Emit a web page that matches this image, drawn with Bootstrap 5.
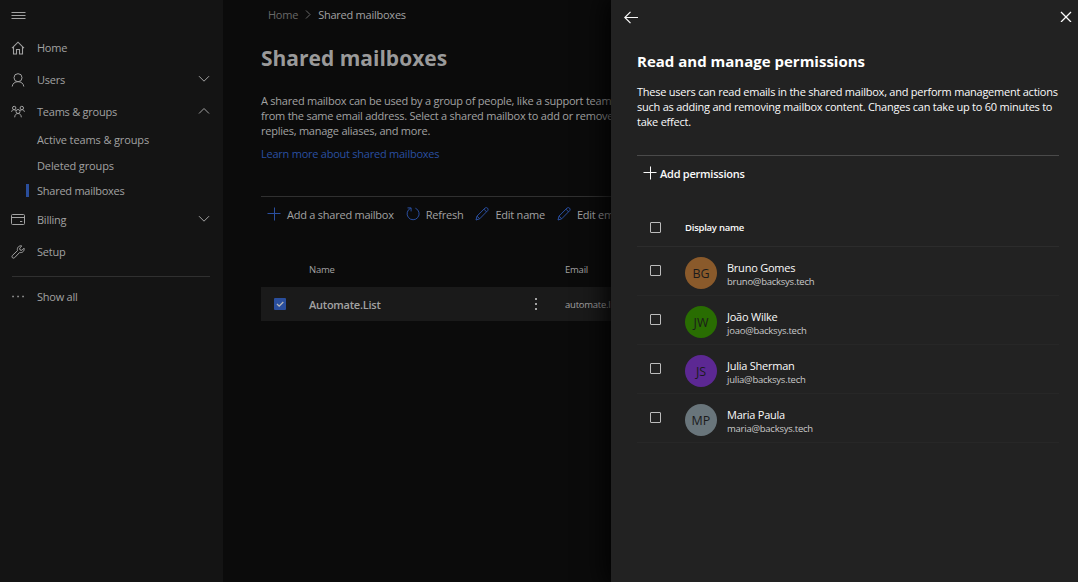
<!DOCTYPE html>
<html lang="en" data-bs-theme="dark">
<head>
<meta charset="utf-8">
<meta name="viewport" content="width=device-width, initial-scale=1">
<title>Shared mailboxes</title>
<link href="https://cdn.jsdelivr.net/npm/bootstrap@5.3.0/dist/css/bootstrap.min.css" rel="stylesheet">
<style>
body{background:#0b0b0b;font-family:"Open Sans","Noto Sans",sans-serif;font-size:11px;line-height:15px;letter-spacing:-.24px;white-space:nowrap}
svg{display:block;flex:none;fill:none;stroke:currentColor;stroke-width:1}
a{text-decoration:none}
.side{width:223px;background:#141414;color:#a2a2a2}
.side .nav-link{height:32px;padding:0 13px 0 11px;color:inherit;gap:12px}
.side .nav-link span{padding-bottom:2px}
.side .nav-link .chev{margin:0 0 2px auto}
.side .sub{height:25.4px;padding:0 0 2px 37px;letter-spacing:-.12px}
.side .sub.tight{letter-spacing:-.25px}
.side .sub.active{padding-left:26px;gap:8px}
.side .sub.active::before{content:"";width:3px;height:13px;background:#2a4e9c}
.menu-top{height:31px;padding:0 11px;margin-bottom:1px}
.split{height:1px;margin:8px 13px 4px 12px;background:#303030}
.content{width:388px;padding-left:38px;color:#a2a2a2}
.crumbs{height:29px;padding-left:7px;gap:7px}
.crumbs a,.crumbs svg{color:#686868}
.title{font-size:21px;line-height:28px;margin:15px 0 0;letter-spacing:0;color:#9a9a9a}
.intro{margin-top:21px}
.blue{color:#2a4fa0}
.tools{margin-top:35px;height:36px;border-top:1px solid #303030;padding-left:6px}
.tool{gap:6px}
.tool svg{margin-bottom:2px}
.grid-head{height:36px;margin-top:19px;padding-left:48px}
.grid-row{height:34px}
.tiny{font-size:9.5px;line-height:13px}
.picked{background:#1a1a1a}
.tick{width:12px;height:12px;margin:0 23px 0 13px;border-radius:1px;background:#2a4e9c;color:#b8b8b8;flex:none}
.cell-name{width:222px;flex:none}
.cell-wide{width:256px;flex:none}
.cell-mail{margin-left:24px}
.panel{background:#222;color:#fafafa;box-shadow:0 0 26px 4px #000;z-index:2}
.panel-top{height:35px;padding:0 6px 0 13px}
.panel-body{padding:0 19px 0 26px}
.panel h2{font-size:15px;line-height:20px;margin:16px 0 0;letter-spacing:0;color:#fff}
.panel .desc{margin-top:13px}
.add-bar{margin-top:26px;border-top:1px solid #4a4a4a;height:36px;padding-left:6px;gap:3px}
.add-bar svg{margin-bottom:2px}
.head{height:56px;padding-top:17px;border-bottom:1px solid #2c2c2c}
.head .tiny{padding-top:1px}
.person{height:49px;border-bottom:1px solid #272727}
.box{width:11px;height:11px;margin-left:13px;border:1px solid #bcbcbc;border-radius:1px;flex:none}
.person .box{margin-bottom:2px}
.who{padding-top:6px}
.face{width:32px;height:32px;margin:4px 10px 0 24px;font-size:12.5px;color:#1b1b1b;letter-spacing:0;padding-top:1px}
.mail{color:#cacaca}
.bg-o{background:#8a5a2b}.bg-g{background:#296d02}.bg-p{background:#5c2893}.bg-s{background:#69757b}
</style>
</head>
<body>
<div class="d-flex vh-100 overflow-hidden">
  <nav class="side flex-shrink-0">
    <div class="menu-top d-flex align-items-center"><svg width="15" height="15"><path d="M.5 4.5h14M.5 7.500h14M.5 10.500h14"/></svg></div>
    <div class="nav flex-column flex-nowrap">
      <a class="nav-link d-flex align-items-center" href="#"><svg width="14" height="14"><path d="M1 7.200 7 1.200l6 6M2.500 5.800v7.200h3V8.500h3v4.500h3V5.800" stroke-width="1.100"/></svg><span>Home</span></a>
      <a class="nav-link d-flex align-items-center" href="#"><svg width="14" height="14"><circle cx="7" cy="4.700" r="4"/><path d="M1.200 13.500C1.600 10.300 4 8.700 7 8.700s5.400 1.600 5.800 4.800"/></svg><span>Users</span><svg class="chev" width="12" height="8"><path d="m1 1.200 5 5 5-5"/></svg></a>
      <a class="nav-link d-flex align-items-center" href="#"><svg width="14" height="14"><circle cx="3.200" cy="3" r="1.700"/><circle cx="10.800" cy="3" r="1.700"/><circle cx="7" cy="6.500" r="2"/><path d="M.6 6.800c.1-1.300 1-2.100 2.400-2.100.8 0 1.400.3 1.900.9M13.400 6.800c-.1-1.300-1-2.100-2.400-2.100-.8 0-1.400.3-1.900.9M3.700 12.300c.1-2.500 1.400-3.800 3.300-3.800s3.200 1.300 3.300 3.800"/></svg><span>Teams &amp; groups</span><svg class="chev" width="12" height="8"><path d="m1 6.500 5-5 5 5"/></svg></a>
      <a class="nav-link sub d-flex align-items-center" href="#">Active teams &amp; groups</a>
      <a class="nav-link sub d-flex align-items-center" href="#">Deleted groups</a>
      <a class="nav-link sub tight active d-flex align-items-center" href="#">Shared mailboxes</a>
      <a class="nav-link d-flex align-items-center" href="#"><svg width="14" height="14"><rect x=".5" y="1.500" width="13" height="10" rx="1"/><path d="M.5 4.500h13M9 8.500h2.300"/></svg><span>Billing</span><svg class="chev" width="12" height="8"><path d="m1 1.200 5 5 5-5"/></svg></a>
      <a class="nav-link d-flex align-items-center" href="#"><svg width="14" height="14"><path d="M10.800 1 8.700 3.100l.3 1.900 1.900.3L13 3.200c.7 2.400-1.300 5-4.400 4.300l-5 5.200c-1.500 1.300-3.500-.5-2.300-2.100l5.200-5C5.600 2.500 8.300.2 10.800 1Z"/></svg><span>Setup</span></a>
    </div>
    <div class="split"></div>
    <a class="nav-link d-flex align-items-center" href="#"><svg width="14" height="14"><path stroke-width="1.500" d="M1.300 6.500h1.500M6.300 6.500h1.500M11.300 6.500h1.500"/></svg><span>Show all</span></a>
  </nav>

  <main class="content flex-shrink-0 overflow-hidden">
    <div class="crumbs d-flex align-items-center"><a href="#">Home</a><svg width="6" height="9"><path d="m1 .5 4 4-4 4"/></svg><span>Shared mailboxes</span></div>
    <h1 class="title fw-bold">Shared mailboxes</h1>
    <p class="intro mb-2">A shared mailbox can be used by a group of people, like a support team<br>from the same email address. Select a shared mailbox to add or remove<br>replies, manage aliases, and more.</p>
    <a class="blue d-block" href="#">Learn more about shared mailboxes</a>
    <div class="tools d-flex align-items-center">
      <div class="tool d-flex align-items-center"><svg class="blue" width="14" height="14"><path d="M7.500.5v13M.5 6.500h13"/></svg><span>Add a shared mailbox</span></div>
      <div class="tool d-flex align-items-center ms-2 ps-1"><svg class="blue" width="14" height="14"><path d="M4.800 1.200a6 6 0 1 0 4.600 0M1.500.9h3.600v3.500"/></svg><span>Refresh</span></div>
      <div class="tool d-flex align-items-center ms-2 ps-1"><svg class="blue" width="14" height="14"><path d="m1 13 1-3.900L10.200.9c1.700-1 3.700.8 2.600 2.600L4.700 11.800zM9 2.200 11.700 5M2 9.100l2.700 2.700"/></svg><span>Edit name</span></div>
      <div class="tool d-flex align-items-center ms-2 ps-1"><svg class="blue" width="14" height="14"><path d="m1 13 1-3.900L10.200.9c1.700-1 3.700.8 2.600 2.600L4.700 11.800zM9 2.200 11.700 5M2 9.100l2.700 2.700"/></svg><span>Edit email</span></div>
    </div>
    <div class="grid-head tiny d-flex align-items-center"><span class="cell-wide">Name</span><span>Email</span></div>
    <div class="grid-row picked d-flex align-items-center">
      <span class="tick"><svg width="12" height="12"><path d="m3 6 2.200 2.200L9.300 4" stroke-width="1.300"/></svg></span>
      <span class="cell-name fw-semibold">Automate.List</span>
      <svg width="10" height="14"><path stroke-width="2" d="M5 1v2M5 6v2M5 11v2"/></svg>
      <span class="tiny cell-mail">automate.list</span>
    </div>
  </main>

  <aside class="panel flex-grow-1 position-relative">
    <div class="panel-top d-flex align-items-center justify-content-between">
      <svg width="14" height="13"><path d="M.8 6.500H14M6.500.8.8 6.500l5.700 5.700" stroke-width="1.200"/></svg>
      <svg width="12" height="12" class="mb-1"><path d="m1 2 10 10M11 2 1 12" stroke-width="1.300"/></svg>
    </div>
    <div class="panel-body">
      <h2 class="fw-bold">Read and manage permissions</h2>
      <p class="desc mb-0">These users can read emails in the shared mailbox, and perform management actions<br>such as adding and removing mailbox content. Changes can take up to 60 minutes to<br>take effect.</p>
      <div class="add-bar d-flex align-items-center fw-semibold"><svg width="14" height="14"><path d="M7.500.5v13M.5 6.500h13"/></svg><span>Add permissions</span></div>
      <div class="head d-flex align-items-center"><span class="box"></span><span class="tiny fw-semibold ms-4">Display name</span></div>
      <div class="person d-flex align-items-center"><span class="box"></span><span class="face bg-o rounded-circle d-flex align-items-center justify-content-center">BG</span><div class="who"><div>Bruno Gomes</div><div class="tiny mail">bruno@backsys.tech</div></div></div>
      <div class="person d-flex align-items-center"><span class="box"></span><span class="face bg-g rounded-circle d-flex align-items-center justify-content-center">JW</span><div class="who"><div>João Wilke</div><div class="tiny mail">joao@backsys.tech</div></div></div>
      <div class="person d-flex align-items-center"><span class="box"></span><span class="face bg-p rounded-circle d-flex align-items-center justify-content-center">JS</span><div class="who"><div>Julia Sherman</div><div class="tiny mail">julia@backsys.tech</div></div></div>
      <div class="person d-flex align-items-center"><span class="box"></span><span class="face bg-s rounded-circle d-flex align-items-center justify-content-center">MP</span><div class="who"><div>Maria Paula</div><div class="tiny mail">maria@backsys.tech</div></div></div>
    </div>
  </aside>
</div>
</body>
</html>
